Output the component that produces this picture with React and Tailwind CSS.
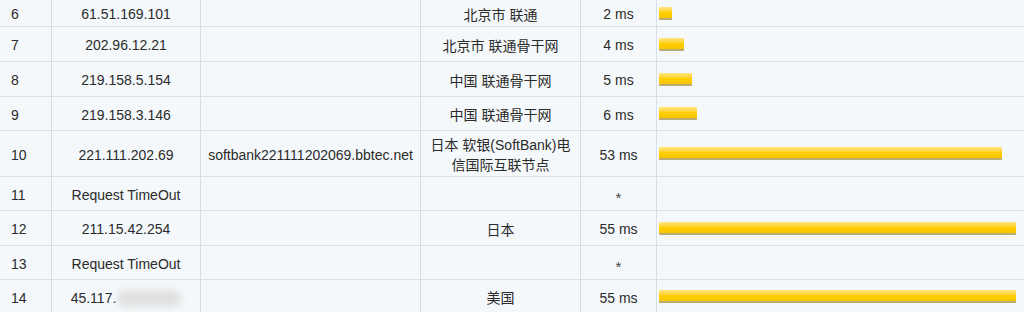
import React from 'react';

// traceroute hops 6-14, row heights tuned to the screenshot grid
const hops = [
  { n: 6, ip: '61.51.169.101', host: '', loc: '北京市 联通', ms: '2 ms', bar: 13, h: 'h-[27px]' },
  { n: 7, ip: '202.96.12.21', host: '', loc: '北京市 联通骨干网', ms: '4 ms', bar: 25, h: 'h-[35px]' },
  { n: 8, ip: '219.158.5.154', host: '', loc: '中国 联通骨干网', ms: '5 ms', bar: 33, h: 'h-[35px]' },
  { n: 9, ip: '219.158.3.146', host: '', loc: '中国 联通骨干网', ms: '6 ms', bar: 38, h: 'h-[34px]' },
  { n: 10, ip: '221.111.202.69', host: 'softbank221111202069.bbtec.net', loc: '日本 软银(SoftBank)电信国际互联节点', ms: '53 ms', bar: 343, h: 'h-[46px]' },
  { n: 11, ip: 'Request TimeOut', host: '', loc: '', ms: '*', bar: 0, h: 'h-[34px]' },
  { n: 12, ip: '211.15.42.254', host: '', loc: '日本', ms: '55 ms', bar: 357, h: 'h-[35px]' },
  { n: 13, ip: 'Request TimeOut', host: '', loc: '', ms: '*', bar: 0, h: 'h-[34px]' },
  { n: 14, ip: '45.117.', blur: true, host: '', loc: '美国', ms: '55 ms', bar: 357, h: 'h-[34px]' },
];

const cell = 'flex items-center border-r border-[#d6ddea] h-full pt-[3px]';

function Bar({ width }) {
  if (!width) return null;
  return (
    <div
      className="h-[13px] rounded-[1px] bg-gradient-to-b from-[#ffe57a] via-[#ffd000] to-[#f7c500] border-b-2 border-[#b9ab74]"
      style={{ width }}
    />
  );
}

function Row({ hop }) {
  return (
    <div className={`grid grid-cols-[52px_149px_220px_160px_76px_1fr] border-b border-[#d9e1ea] ${hop.h}`}>
      <div className={`${cell} pl-[11px]`}>{hop.n}</div>
      <div className={`${cell} justify-center`}>
        {hop.ip}
        {hop.blur && <span className="inline-block w-[64px] h-[17px] ml-[1px] rounded-full bg-[#e0e0e0] blur-[3px]" />}
      </div>
      <div className={`${cell} justify-center`}>{hop.host}</div>
      <div className={`${cell} justify-center text-center px-[6px] leading-[20px]`}>{hop.loc}</div>
      <div className={`${cell} justify-center`}>
        {hop.ms === '*' ? <span className="text-[#444] text-[15px] translate-y-[3px]">*</span> : hop.ms}
      </div>
      <div className="flex items-center pl-[2px]">
        <Bar width={hop.bar} />
      </div>
    </div>
  );
}

export default function App() {
  return (
    <div className="w-[1024px] h-[312px] overflow-hidden bg-[#f4f8fa] text-[14px] text-[#2b2b2b] font-['Liberation_Sans','Noto_Sans_CJK_SC',sans-serif]">
      {hops.map((hop) => (
        <Row key={hop.n} hop={hop} />
      ))}
    </div>
  );
}
